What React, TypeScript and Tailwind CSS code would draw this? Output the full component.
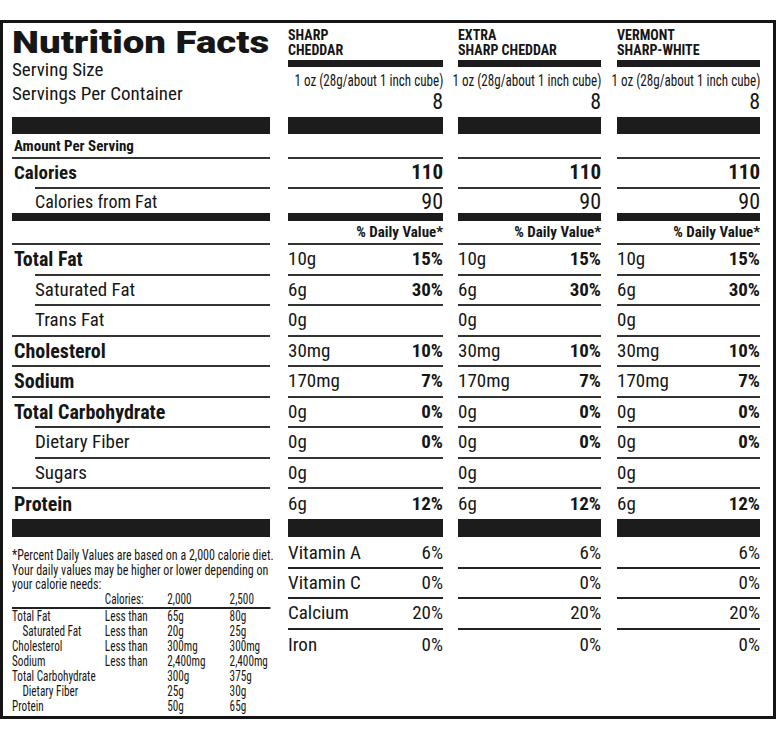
import React from 'react'

const cols = ['w-[155px] ml-[18px]', 'w-[143px] ml-[15px]', 'w-[143px] ml-[16px]']

const products = [
  ['SHARP', 'CHEDDAR'],
  ['EXTRA', 'SHARP CHEDDAR'],
  ['VERMONT', 'SHARP-WHITE'],
]

type Nutrient = { label: string; bold?: boolean; indent?: boolean; amount: string; dv?: string }

const nutrients: Nutrient[] = [
  { label: 'Total Fat', bold: true, amount: '10g', dv: '15%' },
  { label: 'Saturated Fat', indent: true, amount: '6g', dv: '30%' },
  { label: 'Trans Fat', indent: true, amount: '0g' },
  { label: 'Cholesterol', bold: true, amount: '30mg', dv: '10%' },
  { label: 'Sodium', bold: true, amount: '170mg', dv: '7%' },
  { label: 'Total Carbohydrate', bold: true, amount: '0g', dv: '0%' },
  { label: 'Dietary Fiber', indent: true, amount: '0g', dv: '0%' },
  { label: 'Sugars', indent: true, amount: '0g' },
  { label: 'Protein', bold: true, amount: '6g', dv: '12%' },
]

const vitamins = [
  ['Vitamin A', '6%'],
  ['Vitamin C', '0%'],
  ['Calcium', '20%'],
  ['Iron', '0%'],
]

// daily value reference table in the footnote
const limits = [
  ['Total Fat', 'Less than', '65g', '80g'],
  ['Saturated Fat', 'Less than', '20g', '25g'],
  ['Cholesterol', 'Less than', '300mg', '300mg'],
  ['Sodium', 'Less than', '2,400mg', '2,400mg'],
  ['Total Carbohydrate', '', '300g', '375g'],
  ['Dietary Fiber', '', '25g', '30g'],
  ['Protein', '', '50g', '65g'],
]

function BarRow({ h }: { h: string }) {
  return (
    <div className="flex">
      <div className={`w-[258px] shrink-0 bg-[#1c1c1c] ${h}`} />
      {cols.map((c) => (
        <div key={c} className={`${c} shrink-0 bg-[#1c1c1c] ${h}`} />
      ))}
    </div>
  )
}

export default function App() {
  return (
    <div className="w-[778px] h-[736px] bg-white pt-[20px] font-['Roboto',sans-serif] font-stretch-condensed text-[#161616]">
      <div className="w-[776px] border-[3px] border-[#151515] pl-[9px]">
        {/* header */}
        <div className="flex h-[94px]">
          <div className="w-[258px] shrink-0 flex flex-col">
            <div className="mt-[3px] h-[32px] text-[32px] leading-[32px] font-black font-stretch-normal whitespace-nowrap">
              <span className="inline-block origin-left scale-x-[1.2]">Nutrition Facts</span>
            </div>
            <div className="text-[19px] leading-[24px]">Serving Size</div>
            <div className="text-[19px] leading-[24px]">Servings Per Container</div>
          </div>
          {products.map((p, i) => (
            <div key={i} className={`${cols[i]} shrink-0 flex flex-col`}>
              <div className="mt-[5px] text-[14px] leading-[15px] font-bold">
                <div>{p[0]}</div>
                <div>{p[1]}</div>
              </div>
              <div className="mt-[2px] h-[7px] bg-[#1c1c1c]" />
              <div className="mt-[3px] flex justify-end text-[17px] leading-[20px] whitespace-nowrap">
                <span className="inline-block origin-right scale-x-[0.77]">1 oz (28g/about 1 inch cube)</span>
              </div>
              <div className="mt-[1px] text-[22px] leading-[22px] text-right">8</div>
            </div>
          ))}
        </div>

        <BarRow h="h-[17px]" />

        {/* amount per serving */}
        <div className="flex h-[23px]">
          <div className="w-[258px] shrink-0 flex items-center pl-[2px] pt-[2px] text-[15px] font-bold">
            Amount Per Serving
          </div>
        </div>

        {/* calories */}
        <div className="flex h-[30px]">
          <div className="w-[258px] shrink-0 border-t-2 border-[#333] flex items-center pl-[2px] text-[19px] font-bold">
            Calories
          </div>
          {cols.map((c) => (
            <div key={c} className={`${c} shrink-0 border-t-2 border-[#333] flex items-center justify-end text-[21px] font-bold`}>
              110
            </div>
          ))}
        </div>

        {/* calories from fat */}
        <div className="flex h-[26px]">
          <div className="w-[258px] shrink-0 flex">
            <div className="flex-1 ml-[23px] border-t-2 border-[#333] flex items-center text-[18px]">
              Calories from Fat
            </div>
          </div>
          {cols.map((c) => (
            <div key={c} className={`${c} shrink-0 border-t-2 border-[#333] flex items-center justify-end text-[22px]`}>
              90
            </div>
          ))}
        </div>

        <BarRow h="h-[8px]" />

        {/* % daily value */}
        <div className="flex h-[22px]">
          <div className="w-[258px] shrink-0" />
          {cols.map((c) => (
            <div key={c} className={`${c} shrink-0 flex items-center justify-end text-[15px] font-bold`}>
              % Daily Value*
            </div>
          ))}
        </div>

        {/* nutrients */}
        {nutrients.map((n, idx) => (
          <div key={n.label} className={`flex ${idx === nutrients.length - 1 ? 'h-[32px]' : 'h-[30.5px]'}`}>
            <div className="w-[258px] shrink-0 flex">
              <div
                className={`flex-1 border-t-2 border-[#333] flex items-center ${
                  n.indent ? 'ml-[23px] text-[19px]' : 'pl-[2px] text-[20px] font-bold'
                }`}
              >
                {n.label}
              </div>
            </div>
            {cols.map((c) => (
              <div key={c} className={`${c} shrink-0 border-t-2 border-[#333] flex items-center justify-between text-[19px]`}>
                <span>{n.amount}</span>
                <span className="font-bold">{n.dv}</span>
              </div>
            ))}
          </div>
        ))}

        <BarRow h="h-[18px]" />

        {/* footnote + vitamins */}
        <div className="flex h-[179px]">
          <div className="w-[258px] shrink-0">
            <div className="w-[322.5px] origin-left scale-x-[0.8] pt-[11px] text-[15px] leading-[14.5px] whitespace-nowrap">
              <div>*Percent Daily Values are based on a 2,000 calorie diet.</div>
              <div>Your daily values may be higher or lower depending on</div>
              <div>your calorie needs:</div>
              <div className="grid grid-cols-[116px_78px_78px_1fr] text-[14px] border-b-2 border-[#222] pb-[1px]">
                <span />
                <span>Calories:</span>
                <span>2,000</span>
                <span>2,500</span>
              </div>
              {limits.map((r, i) => (
                <div key={r[0]} className="grid grid-cols-[116px_78px_78px_1fr] text-[14px] leading-[15px]">
                  <span className={i === 1 || i === 5 ? 'pl-[13px]' : ''}>{r[0]}</span>
                  <span>{r[1]}</span>
                  <span>{r[2]}</span>
                  <span>{r[3]}</span>
                </div>
              ))}
            </div>
          </div>
          {cols.map((c, ci) => (
            <div key={c} className={`${c} shrink-0 flex flex-col`}>
              {vitamins.map((v, i) => (
                <div
                  key={v[0]}
                  className={`flex items-center justify-between text-[19px] ${
                    i === 0 ? 'h-[32px] pt-[3px]' : i === 2 ? 'h-[31px]' : 'h-[30px]'
                  } ${i < 3 ? 'border-b-2 border-[#222]' : ''}`}
                >
                  <span>{ci === 0 ? v[0] : ''}</span>
                  <span>{v[1]}</span>
                </div>
              ))}
            </div>
          ))}
        </div>
      </div>
    </div>
  )
}
